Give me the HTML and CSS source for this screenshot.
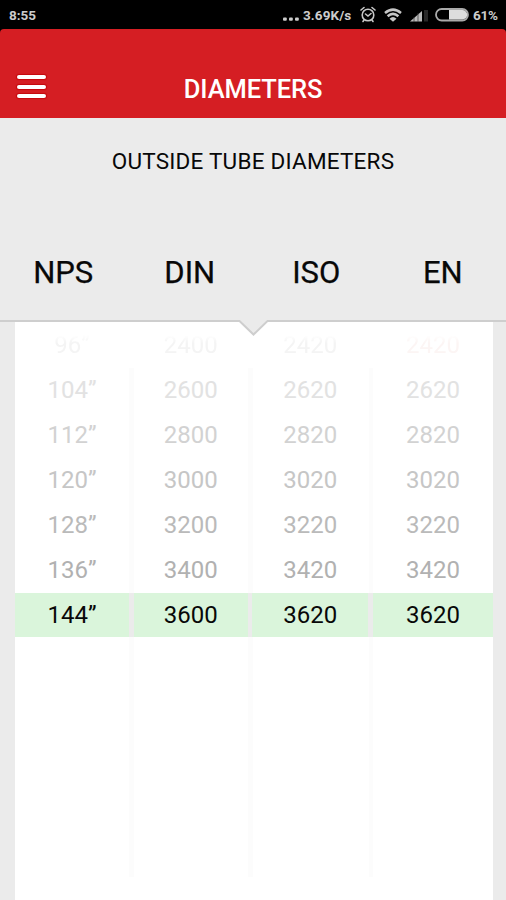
FILE: index.html
```html
<!DOCTYPE html>
<html lang="en">
<head>
<meta charset="utf-8">
<title>Diameters</title>
<link rel="stylesheet" href="styles.css">
</head>
<body>
<div class="status">
  <span class="time">8:55</span>
  <div class="status-right">
    <svg class="dots" width="16" height="4" viewBox="0 0 16 4" fill="#ccc"><rect x="0" y="0.5" width="3.8" height="3.2" rx="1"/><rect x="6" y="0.5" width="3.8" height="3.2" rx="1"/><rect x="12" y="0.5" width="3.8" height="3.2" rx="1"/></svg>
    <span class="speed">3.69K/s</span>
    <svg class="alarm" width="16" height="17" viewBox="0 0 16 17" fill="none" stroke="#c6c6c6" stroke-width="1.6" stroke-linecap="round"><circle cx="8" cy="9" r="5.8"/><path d="M1 4 4 1.500M15 4 12 1.500M5.500 8 8 10 11 7.500M4 14 3 15.500M12 14 13 15.500"/></svg>
    <svg class="wifi" width="18" height="14" viewBox="0 0 18 14" fill="none" stroke="#c6c6c6" stroke-width="2.500"><path d="M1 5Q9-1.800 17 5M3.600 8.300Q9 3.500 14.400 8.300"/><path d="M5.500 10.700Q9 7.500 12.500 10.700L9 13.800z" fill="#c6c6c6" stroke="none"/></svg>
    <svg class="signal" width="20" height="13" viewBox="0 0 20 13"><path d="M0 12.500 12 2V12.500z" fill="#bcbcbc"/><path d="M4 8v5M8 4v9" stroke="#333" stroke-width=".7"/><path d="M14 1h4v11.500h-4z" fill="#292929"/></svg>
    <svg class="battery" width="35" height="14" viewBox="0 0 35 14"><rect x="1" y="1" width="32" height="11.500" rx="5.700" fill="#000" stroke="#aaa" stroke-width="1.800"/><path d="M14 2h13.500a4.700 4.700 0 0 1 0 9.500H14z" fill="#ddd"/></svg>
    <span class="percent">61%</span>
  </div>
</div>
<header class="appbar">
  <button class="menu" aria-label="Menu"><i></i><i></i><i></i></button>
  <h1>DIAMETERS</h1>
</header>
<section class="heading">
  <h2>OUTSIDE TUBE DIAMETERS</h2>
  <div class="labels"><span>NPS</span><span>DIN</span><span>ISO</span><span>EN</span></div>
  <svg class="divider" width="506" height="18" viewBox="0 0 506 18"><path d="M0 0H506V2H267.500L253.500 15.500 239.500 2H0z" fill="#ebebeb"/><path d="M0 2H239.500L253.500 15.500 267.500 2H506" fill="none" stroke="#cecece" stroke-width="2"/></svg>
</section>
<main class="picker">
  <div class="row r0"><span>96”</span><span>2400</span><span>2420</span><span>2420</span></div>
  <div class="row r1"><span>104”</span><span>2600</span><span>2620</span><span>2620</span></div>
  <div class="row r2"><span>112”</span><span>2800</span><span>2820</span><span>2820</span></div>
  <div class="row r3"><span>120”</span><span>3000</span><span>3020</span><span>3020</span></div>
  <div class="row r4"><span>128”</span><span>3200</span><span>3220</span><span>3220</span></div>
  <div class="row r5"><span>136”</span><span>3400</span><span>3420</span><span>3420</span></div>
  <div class="row selected"><span>144”</span><span>3600</span><span>3620</span><span>3620</span></div>
  <div class="row blank"><span></span><span></span><span></span><span></span></div>
</main>
</body>
</html>
```
FILE: styles.css
```css
* { box-sizing: border-box; }
body {
  margin: 0;
  width: 506px;
  height: 900px;
  overflow: hidden;
  display: flex;
  flex-direction: column;
  background: #ebebeb;
  font-family: Roboto, "Liberation Sans", sans-serif;
  color: #080808;
}
.status {
  height: 29px;
  flex: none;
  background: #000;
  color: #ccc;
  display: flex;
  align-items: center;
  justify-content: space-between;
  padding: 0 8px 0 9px;
  font-size: 13.5px;
  font-weight: 700;
}
.status-right { display: flex; align-items: center; }
.dots { margin: 8px 4px 0 0; }
.speed { width: 50px; letter-spacing: .1px; }
.alarm { margin-left: 7px; }
.wifi { margin-left: 8px; }
.signal { margin: 1px 0 0 8px; }
.battery { margin-left: 5px; }
.percent { margin-left: 3px; width: 25px; letter-spacing: -.2px; }
.appbar {
  height: 89px;
  flex: none;
  background: #d51e23;
  border-radius: 4px 4px 0 0;
  box-shadow: 0 -4px 0 #000;
  display: grid;
  grid-template-columns: 62px 1fr 62px;
  padding-top: 32px;
}
.menu {
  border: 0;
  background: none;
  padding: 14px 0 0 17px;
  display: flex;
  flex-direction: column;
  gap: 5.5px;
}
.menu i { width: 29px; height: 4px; border-radius: 2px; background: #fff; box-shadow: 0 0 1px 1px #c5070d; }
h1, h2 { margin: 0; text-align: center; }
h1 { color: #fff; font-size: 25.5px; line-height: 56px; font-weight: 500; letter-spacing: -.1px; }
.heading {
  height: 202px;
  flex: none;
  display: flex;
  flex-direction: column;
  position: relative;
}
h2 { font-size: 22.5px; font-weight: 400; line-height: 28px; margin-top: 29px; letter-spacing: .22px; }
.labels {
  display: grid;
  grid-template-columns: repeat(4, 1fr);
  margin-top: 78px;
  text-align: center;
  font-size: 31px;
  line-height: 40px;
  -webkit-text-stroke: .25px;
}
.divider { position: absolute; left: 0; top: 201px; z-index: 1; }
.picker {
  flex: 1;
  margin: 0 13px 0 15px;
  background: #fff;
  display: flex;
  flex-direction: column;
  padding-top: 3px;
}
.row {
  height: 45px;
  flex: none;
  display: grid;
  grid-template-columns: 114px 114px 116px 120px;
  justify-content: space-between;
  text-align: center;
  font-size: 24px;
  line-height: 44px;
  background: linear-gradient(90deg, transparent 114px, #fcfcfc 114px 119px, transparent 119px 233px, #fcfcfc 233px 238px, transparent 238px 354px, #fcfcfc 354px 358px, transparent 358px);
}
.r0 {
  color: #f4f4f4;
  background: none;
  -webkit-mask-image: linear-gradient(transparent 12px, #000 20px);
  mask-image: linear-gradient(transparent 12px, #000 20px);
}
.r0 span:last-child { color: #fcf5f4; }
.r1 { color: #e2e2e2; }
.r2 { color: #d2d2d2; }
.r3 { color: #c6c6c6; }
.r4 { color: #bababa; }
.r5 { color: #b1b1b1; }
.selected { height: 44px; background: #ebebeb; color: #080808; }
.selected span { background: #daf5db; }
.blank { height: 240px; }
```
